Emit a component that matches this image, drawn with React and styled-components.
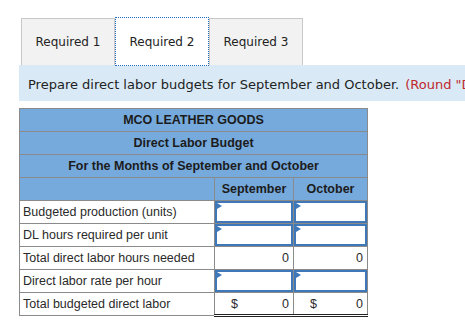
import React from 'react'
import styled, { createGlobalStyle } from 'styled-components'

const GlobalStyle = createGlobalStyle`
  html, body {
    margin: 0;
    padding: 0;
    background: #fff;
    overflow: hidden;
  }
`

const Page = styled.div`
  width: 465px;
  height: 321px;
  overflow: hidden;
  padding: 17px 0 0 19px;
  box-sizing: border-box;
`

const TabBar = styled.div`
  display: flex;
  margin-left: 2px;
  height: 48px;
`

const Tab = styled.div`
  width: 94px;
  box-sizing: border-box;
  display: flex;
  align-items: center;
  justify-content: center;
  font-family: "DejaVu Sans", Verdana, sans-serif;
  font-size: 12px;
  color: #222;
  background: ${p => (p.$active ? '#fff' : '#f2f2f2')};
  border: ${p => (p.$active ? '1px dotted #1d66c2' : '1px solid #c8c8c8')};
  border-bottom: ${p => (p.$active ? '1px dotted #1d66c2' : 'none')};
  margin-top: ${p => (p.$active ? '0' : '1px')};
  height: ${p => (p.$active ? '49px' : 'auto')};
  position: relative;
  z-index: ${p => (p.$active ? 1 : 0)};
`

const Instruction = styled.div`
  height: 36px;
  box-sizing: border-box;
  padding: 3px 0 0 9px;
  background: #d9eaf6;
  display: flex;
  align-items: center;
  white-space: nowrap;
  overflow: hidden;
  font-family: "DejaVu Sans", Verdana, sans-serif;
  font-size: 13px;
  color: #222;
`

const Note = styled.span`
  color: #c1272d;
  margin-left: 6px;
`

const Table = styled.table`
  margin-top: 7px;
  border-collapse: collapse;
  font-family: "Liberation Sans", Arial, sans-serif;
  font-size: 12px;
  color: #222;
`

const HeadCell = styled.td`
  background: #76aadd;
  border: 1px solid #8a8a8a;
  height: 22px;
  padding: 0 4px;
  font-weight: bold;
  font-size: 12.5px;
  text-align: center;
  color: #1c1c1c;
`

const LabelCell = styled.td`
  width: 186px;
  height: 22px;
  padding: 0 0 0 3px;
  border: 1px solid #8a8a8a;
  font-size: 12.5px;
  color: #2a2a2a;
  white-space: nowrap;
`

const ValueCell = styled.td`
  position: relative;
  height: 22px;
  padding: 0 4px;
  box-sizing: border-box;
  border: 1px solid #8a8a8a;
  border-top: ${p => (p.$strong ? '1px solid #222' : '1px solid #8a8a8a')};
  border-bottom: ${p => (p.$double ? '3px double #222' : '1px solid #8a8a8a')};
  text-align: right;
  font-size: 12.5px;
  color: #2a2a2a;
`

const InputBox = styled.div`
  position: absolute;
  inset: 0;
  border: 2px solid #3f78b8;
  background: #fff;
  &::before {
    content: '';
    position: absolute;
    left: 0;
    top: 0;
    border-left: 5px solid #3f78b8;
    border-top: 3px solid transparent;
    border-bottom: 3px solid transparent;
  }
`

const Amount = styled.div`
  display: flex;
  justify-content: space-between;
  padding-left: 12px;
`

function Input() {
  return <ValueCell><InputBox /></ValueCell>
}

export default function App() {
  return (
    <Page>
      <GlobalStyle />
      <TabBar>
        <Tab>Required 1</Tab>
        <Tab $active>Required 2</Tab>
        <Tab>Required 3</Tab>
      </TabBar>
      <Instruction>
        Prepare direct labor budgets for September and October.
        <Note>(Round "Direct labor rate per hour" answers to 2 decimal places.)</Note>
      </Instruction>
      <Table>
        <tbody>
          <tr><HeadCell colSpan={3}>MCO LEATHER GOODS</HeadCell></tr>
          <tr><HeadCell colSpan={3}>Direct Labor Budget</HeadCell></tr>
          <tr><HeadCell colSpan={3}>For the Months of September and October</HeadCell></tr>
          <tr>
            <HeadCell style={{ width: 186 }} />
            <HeadCell style={{ width: 70 }}>September</HeadCell>
            <HeadCell style={{ width: 65 }}>October</HeadCell>
          </tr>
          <tr>
            <LabelCell>Budgeted production (units)</LabelCell>
            <Input />
            <Input />
          </tr>
          <tr>
            <LabelCell>DL hours required per unit</LabelCell>
            <Input />
            <Input />
          </tr>
          <tr>
            <LabelCell>Total direct labor hours needed</LabelCell>
            <ValueCell $strong>0</ValueCell>
            <ValueCell $strong>0</ValueCell>
          </tr>
          <tr>
            <LabelCell>Direct labor rate per hour</LabelCell>
            <Input />
            <Input />
          </tr>
          <tr>
            <LabelCell>Total budgeted direct labor</LabelCell>
            <ValueCell $strong $double><Amount><span>$</span><span>0</span></Amount></ValueCell>
            <ValueCell $strong $double><Amount><span>$</span><span>0</span></Amount></ValueCell>
          </tr>
        </tbody>
      </Table>
    </Page>
  )
}
